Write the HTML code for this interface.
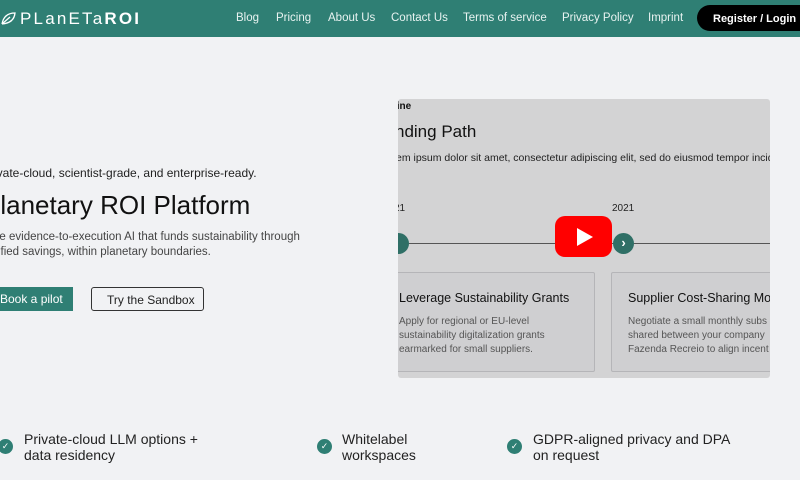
<!DOCTYPE html>
<html><head><meta charset="utf-8"><style>
*{margin:0;padding:0;box-sizing:border-box}
body{width:800px;height:480px;overflow:hidden;background:#f1f2f4;font-family:"Liberation Sans",sans-serif;position:relative;color:#111}
.nav{position:absolute;left:0;top:0;width:800px;height:37px;background:#2f7f74}
.nav a{position:absolute;top:12px;color:#e8f3f1;font-size:11.5px;text-decoration:none}
.logo{position:absolute;left:20px;top:9px;color:#fff;font-size:17px;letter-spacing:2.2px}
.reg{position:absolute;left:697px;top:5px;width:120px;height:26px;background:#000;border-radius:13px;color:#fff;font-size:11px;font-weight:bold;padding:8px 0 0 16px}
.abs{position:absolute;white-space:nowrap}
.vid{position:absolute;left:398px;top:99px;width:372px;height:279px;background:#d3d3d4;border-radius:3px;overflow:hidden}
.card{position:absolute;top:173px;height:100px;border:1px solid #b5b5b8;border-radius:2px;background:#cfcfd1}
.chk{position:absolute;width:15px;height:15px;border-radius:50%;background:#2f7f74;color:#fff;font-size:9px;text-align:center;line-height:15px}
.feat{position:absolute;font-size:14px;color:#222;line-height:16px}
</style></head><body>
<div class="nav">
<svg style="position:absolute;left:0;top:10px" width="18" height="16" viewBox="0 0 18 16"><path d="M2 14 Q4 3 15 3 Q14 13 2 14 M2 14 L10 7" stroke="#fff" stroke-width="1.3" fill="none"/></svg>
<div class="logo">PLanETa<b>ROI</b></div>
<a style="left:236px">Blog</a><a style="left:276px">Pricing</a><a style="left:328px">About Us</a><a style="left:391px">Contact Us</a><a style="left:463px">Terms of service</a><a style="left:562px">Privacy Policy</a><a style="left:648px">Imprint</a>
<div class="reg">Register / Login</div>
</div>
<div class="abs" style="left:-18px;top:166px;font-size:12px;color:#222">Private-cloud, scientist-grade, and enterprise-ready.</div>
<div class="abs" style="left:-17px;top:190px;font-size:26px;color:#111">Planetary ROI Platform</div>
<div class="abs" style="left:-14px;top:230px;font-size:11.5px;color:#444;line-height:15px">The evidence-to-execution AI that funds sustainability through<br><span style="margin-left:-4px">verified savings, within planetary boundaries.</span></div>
<div class="abs" style="left:-10px;top:287px;width:83px;height:24px;background:#2f7f74;color:#fff;font-size:12px;padding:5px 0 0 10px">Book a pilot</div>
<div class="abs" style="left:91px;top:287px;width:113px;height:24px;border:1px solid #333;border-radius:3px;font-size:12px;padding:5px 0 0 15px;color:#222">Try the Sandbox</div>
<div class="vid">
<div class="abs" style="left:-4px;top:2px;font-size:10px;font-weight:bold">line</div>
<div class="abs" style="left:-3px;top:23px;font-size:17px">nding Path</div>
<div class="abs" style="left:-2px;top:53px;font-size:10.5px;color:#222">em ipsum dolor sit amet, consectetur adipiscing elit, sed do eiusmod tempor incid</div>
<div class="abs" style="left:-4px;top:104px;font-size:10px;color:#222">21</div>
<div class="abs" style="left:214px;top:104px;font-size:10px;color:#222">2021</div>
<div class="abs" style="left:0;top:144px;width:372px;height:1px;background:#555"></div>
<div class="abs" style="left:-10px;top:134px;width:21px;height:21px;border-radius:50%;background:#2f6f66"></div>
<div class="abs" style="left:215px;top:134px;width:21px;height:21px;border-radius:50%;background:#2f6f66;color:#fff;font-size:13px;text-align:center;line-height:20px;font-weight:bold">›</div>
<div class="abs" style="left:157px;top:117px;width:57px;height:41px;background:#f00;border-radius:10px"><div style="position:absolute;left:22px;top:12px;border-left:16px solid #fff;border-top:9px solid transparent;border-bottom:9px solid transparent"></div></div>
<div class="card" style="left:-10px;width:207px"><div class="abs" style="left:10px;top:18px;font-size:12.5px">Leverage Sustainability Grants</div><div class="abs" style="left:10px;top:42px;font-size:10px;color:#555;line-height:14px">Apply for regional or EU-level<br>sustainability digitalization grants<br>earmarked for small suppliers.</div></div>
<div class="card" style="left:213px;width:180px"><div class="abs" style="left:16px;top:18px;font-size:12.5px">Supplier Cost-Sharing Mo</div><div class="abs" style="left:16px;top:42px;font-size:10px;color:#555;line-height:14px">Negotiate a small monthly subs<br>shared between your company<br>Fazenda Recreio to align incent</div></div>
</div>
<div class="chk" style="left:-2px;top:439px">✓</div><div class="feat" style="left:24px;top:431px">Private-cloud LLM options +<br>data residency</div>
<div class="chk" style="left:317px;top:439px">✓</div><div class="feat" style="left:342px;top:431px">Whitelabel<br>workspaces</div>
<div class="chk" style="left:507px;top:439px">✓</div><div class="feat" style="left:533px;top:431px">GDPR-aligned privacy and DPA<br>on request</div>
</body></html>
